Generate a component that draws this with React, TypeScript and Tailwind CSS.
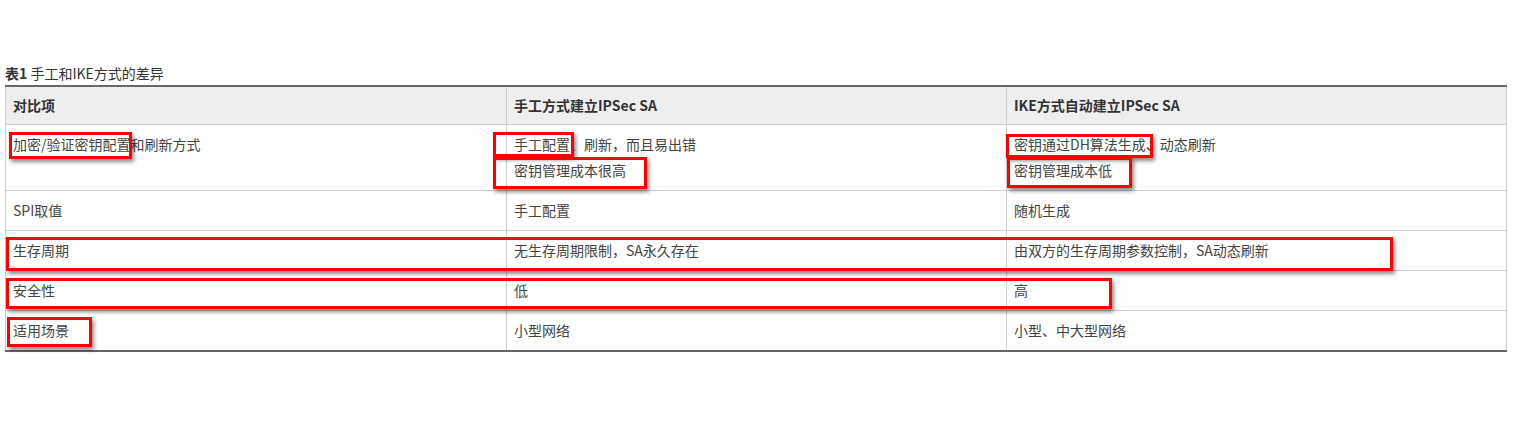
const rows: { item: string; manual: string[]; ike: string[] }[] = [
  {
    item: '加密/验证密钥配置和刷新方式',
    manual: ['手工配置、刷新，而且易出错', '密钥管理成本很高'],
    ike: ['密钥通过DH算法生成、动态刷新', '密钥管理成本低'],
  },
  { item: 'SPI取值', manual: ['手工配置'], ike: ['随机生成'] },
  { item: '生存周期', manual: ['无生存周期限制，SA永久存在'], ike: ['由双方的生存周期参数控制，SA动态刷新'] },
  { item: '安全性', manual: ['低'], ike: ['高'] },
  { item: '适用场景', manual: ['小型网络'], ike: ['小型、中大型网络'] },
];

// annotation boxes drawn over the table
const marks = [
  { left: 9, top: 132, width: 123, height: 27 },
  { left: 493, top: 132, width: 81, height: 25 },
  { left: 493, top: 157, width: 154, height: 32 },
  { left: 1006, top: 134, width: 147, height: 24 },
  { left: 1007, top: 157, width: 125, height: 31 },
  { left: 6, top: 237, width: 1387, height: 34 },
  { left: 6, top: 278, width: 1106, height: 31 },
  { left: 7, top: 317, width: 85, height: 30 },
];

function Cell({ lines }: { lines: string[] }) {
  return (
    <td className="border border-[#d0d0d0] px-[7px] pt-[10px] pb-[11px] align-top">
      {lines.map((l, i) => (
        <p key={i} className={i > 0 ? 'mt-[8px]' : ''}>
          {l}
        </p>
      ))}
    </td>
  );
}

export default function App() {
  return (
    <div
      className="relative w-[1514px] h-[448px] bg-white pt-[64px] pl-[5px] text-[14px] leading-[18px] text-[#333]"
      style={{ fontFamily: '"Noto Sans CJK SC", "Noto Sans", sans-serif' }}
    >
      <div className="mb-[3px] text-[14px] text-[#333]">
        <span className="font-bold">表1</span> 手工和IKE方式的差异
      </div>
      <table className="w-[1501px] table-fixed border-collapse border-t-2 border-b-2 border-t-[#666] border-b-[#666]">
        <colgroup>
          <col className="w-[501px]" />
          <col className="w-[500px]" />
          <col className="w-[500px]" />
        </colgroup>
        <thead>
          <tr className="h-[38px] bg-[#eeeeee] text-left font-bold text-[#333]">
            <th className="border border-[#d0d0d0] border-t-[#666] border-t-2 px-[7px]">对比项</th>
            <th className="border border-[#d0d0d0] border-t-[#666] border-t-2 px-[7px]">手工方式建立IPSec SA</th>
            <th className="border border-[#d0d0d0] border-t-[#666] border-t-2 px-[7px]">IKE方式自动建立IPSec SA</th>
          </tr>
        </thead>
        <tbody className="text-[#444]">
          {rows.map((r) => (
            <tr key={r.item}>
              <Cell lines={[r.item]} />
              <Cell lines={r.manual} />
              <Cell lines={r.ike} />
            </tr>
          ))}
        </tbody>
      </table>
      {marks.map((m, i) => (
        <div
          key={i}
          className="absolute border-[3px] border-[#ff0000] shadow-[2px_3px_4px_rgba(0,0,0,0.45)]"
          style={{ left: m.left, top: m.top, width: m.width, height: m.height }}
        />
      ))}
    </div>
  );
}
